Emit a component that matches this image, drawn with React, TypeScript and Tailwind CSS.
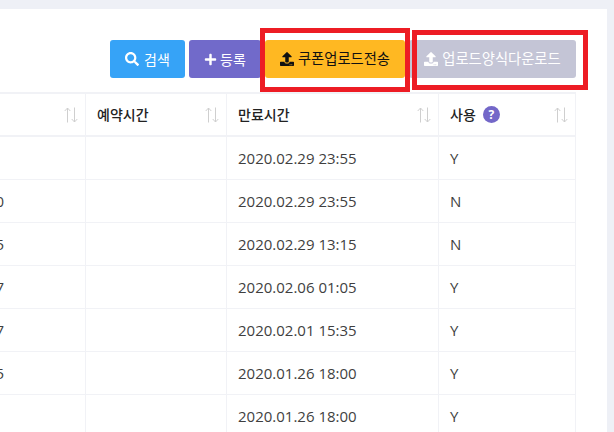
import { FaPlus, FaSearch, FaUpload } from 'react-icons/fa';

const FONT = 'font-["Open_Sans","Noto_Sans_CJK_KR",sans-serif]';

const rows = [
  { clip: '', end: '2020.02.29 23:55', use: 'Y' },
  { clip: '2020.02.29 12:00', end: '2020.02.29 23:55', use: 'N' },
  { clip: '2020.02.29 12:05', end: '2020.02.29 13:15', use: 'N' },
  { clip: '2020.02.01 12:07', end: '2020.02.06 01:05', use: 'Y' },
  { clip: '2020.01.27 12:07', end: '2020.02.01 15:35', use: 'Y' },
  { clip: '2020.01.21 12:05', end: '2020.01.26 18:00', use: 'Y' },
  { clip: '', end: '2020.01.26 18:00', use: 'Y' },
];

function SortIcon() {
  return (
    <svg width="14" height="16" viewBox="0 0 14 16" fill="none" stroke="#cfcfcf" strokeWidth="1">
      <path d="M3.5 15.5V1M.7 4 3.5 1l2.8 3" />
      <path d="M10.5.5V15M7.7 12l2.8 3 2.8-3" />
    </svg>
  );
}

function HeaderCell({ label, help }: { label?: string; help?: boolean }) {
  return (
    <div className="flex items-center justify-between border-r border-[#f1f2f6] pl-[11px] pr-[7px]">
      <span className="flex items-center gap-[7px] text-[14px] font-medium text-[#222]">
        {label}
        {help && (
          <span className="flex h-[17px] w-[17px] items-center justify-center rounded-full bg-[#7367c8] text-[12px] font-bold text-white">
            ?
          </span>
        )}
      </span>
      <SortIcon />
    </div>
  );
}

export default function App() {
  return (
    <div className={`h-[432px] w-[614px] overflow-hidden bg-[#eef0f6] pr-[7px] pt-[9px] ${FONT}`}>
      <div className="relative h-[423px] overflow-hidden bg-white">
        <div className="flex h-[83px] items-start justify-end gap-1 pr-[31px] pt-[31px] text-[14px]">
          <button className="flex h-[38px] w-[75px] items-center justify-center gap-[5px] rounded-[3px] bg-[#36a3f7] text-white">
            <FaSearch size={14} />
            검색
          </button>
          <button className="flex h-[38px] w-[72px] items-center justify-center gap-[3px] rounded-[3px] bg-[#716aca] text-white">
            <FaPlus size={13} />
            등록
          </button>
          <button className="flex h-[38px] w-[140px] items-center justify-center gap-[4px] rounded-[3px] bg-[#ffb822] text-[14.3px] text-[#111]">
            <FaUpload size={14} />
            쿠폰업로드전송
          </button>
          <button className="flex h-[38px] w-[167px] items-center justify-center gap-[4px] rounded-[3px] bg-[#c4c5d6] text-[14.3px] text-white">
            <FaUpload size={14} />
            업로드양식다운로드
          </button>
        </div>

        <div className="w-[576px] border-t-2 border-[#f1f2f6]">
          <div className="grid h-[43px] grid-cols-[86px_141px_212px_137px] border-b-2 border-[#f1f2f6]">
            <HeaderCell />
            <HeaderCell label="예약시간" />
            <HeaderCell label="만료시간" />
            <HeaderCell label="사용" help />
          </div>
          {rows.map((row) => (
            <div
              key={row.end + row.use + row.clip}
              className="grid h-[43px] grid-cols-[86px_141px_212px_137px] border-b border-[#f1f2f6] text-[15px] text-[#3f3f3f]"
            >
              <div className="flex items-center justify-end overflow-hidden whitespace-nowrap border-r border-[#f1f2f6] pr-[81px]">
                {row.clip}
              </div>
              <div className="border-r border-[#f1f2f6]" />
              <div className="flex items-center border-r border-[#f1f2f6] pl-[11px]">{row.end}</div>
              <div className="flex items-center border-r border-[#f1f2f6] pl-[11px]">{row.use}</div>
            </div>
          ))}
        </div>

        {/* red annotation boxes over the screenshot */}
        <div className="absolute left-[260px] top-[19px] h-[64px] w-[150px] border-[5px] border-[#ed1c24]" />
        <div className="absolute left-[412px] top-[21px] h-[60px] w-[176px] border-[5px] border-[#ed1c24]" />
      </div>
    </div>
  );
}
